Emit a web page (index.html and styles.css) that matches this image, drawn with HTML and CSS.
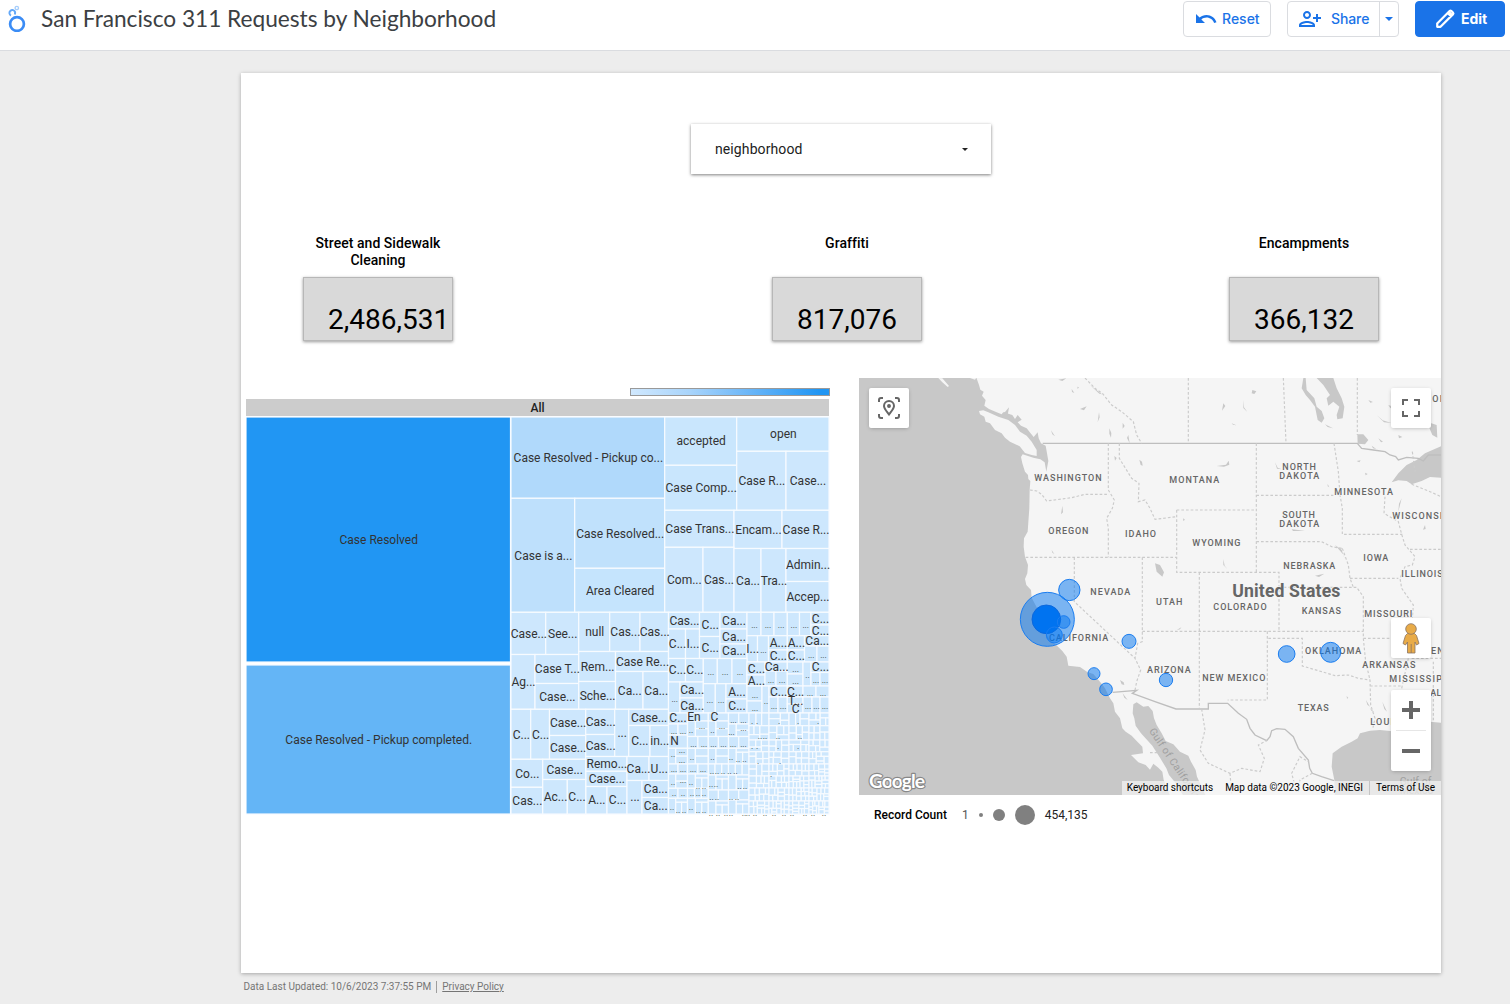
FILE: index.html
```html
<!DOCTYPE html>
<html lang="en">
<head>
<meta charset="utf-8">
<title>San Francisco 311 Requests by Neighborhood</title>
<link rel="stylesheet" href="styles.css">
</head>
<body>
<header class="topbar">
  <svg class="logo" width="20" height="28" viewBox="0 0 20 28" fill="none">
    <circle cx="10" cy="20" r="6.9" stroke="#3b8cf5" stroke-width="2.7"/>
    <path d="M4 11.500A2.900 2.900 0 1 1 8.100 8.100Q8.200 9.200 7.800 10.500" stroke="#63a8f8" stroke-width="2"/>
    <circle cx="9.8" cy="4" r="1.7" stroke="#a5cdfb" stroke-width="1.3"/>
  </svg>
  <h1 class="title">San Francisco 311 Requests by Neighborhood</h1>
  <div class="actions">
    <button class="btn reset">
      <svg width="24" height="24" viewBox="0 0 24 24" fill="currentColor"><path d="M12.5 8c-2.65 0-5.05.99-6.9 2.6L2 7v9h9l-3.62-3.62c1.39-1.16 3.16-1.88 5.12-1.88 3.54 0 6.55 2.31 7.6 5.5l2.37-.78C21.08 11.03 17.15 8 12.5 8z"/></svg>
      <span>Reset</span>
    </button>
    <div class="split">
      <button class="share">
        <svg width="24" height="24" viewBox="0 0 24 24" fill="currentColor"><path d="M9 12c2.21 0 4-1.79 4-4s-1.79-4-4-4-4 1.79-4 4 1.79 4 4 4zm0-6c1.1 0 2 .9 2 2s-.9 2-2 2-2-.9-2-2 .9-2 2-2zm0 8c-2.67 0-8 1.34-8 4v2h16v-2c0-2.660-5.330-4-8-4zm6 4H3c.2-.7 3.300-2 6-2s5.800 1.300 6 2zm5-8V7h-2v3h-3v2h3v3h2v-3h3v-2h-3z"/></svg>
        <span>Share</span>
      </button>
      <button class="more"><svg width="8" height="4" viewBox="0 0 8 4"><path d="M0 0h8L4 4z" fill="currentColor"/></svg></button>
    </div>
    <button class="btn edit">
      <svg width="22" height="22" viewBox="0 0 24 24" fill="none" stroke="currentColor" stroke-width="2.4" stroke-linejoin="round"><path d="M3.500 20.500v-3.600L17.300 3.100q.7-.6 1.400 0l2.200 2.200q.6.700 0 1.400L7.100 20.500zM15 5.500l3.500 3.500"/><path d="M16.500 4.500l3 3"/></svg>
      <span>Edit</span>
    </button>
  </div>
</header>

<main class="sheet">
  <div class="filter"><span>neighborhood</span><svg width="6" height="3" viewBox="0 0 6 3"><path d="M0 0h6L3 3z" fill="#222"/></svg></div>

  <section class="scores">
    <div class="score"><h2>Street and Sidewalk Cleaning</h2><div class="value">2,486,531</div></div>
    <div class="score"><h2>Graffiti</h2><div class="value">817,076</div></div>
    <div class="score"><h2>Encampments</h2><div class="value">366,132</div></div>
  </section>

  <section class="charts">
    <div class="treemap">
      <div class="scale"></div>
      <div class="root">All</div>
      <svg id="tiles" width="584" height="403" viewBox="246 416 584 403"></svg>
    </div>

    <div class="geo">
      <div class="map">
        <svg class="base" width="582" height="417" viewBox="12 9 1746 1251">
          <g class="land">
            <path d="M345 9L360 14 364 8 372 30 376 44 386 50 381 62 392 75 388 92 402 102 425 112 440 118 446 112 472 120 480 132 488 120 500 134 488 142 498 152 515 160 528 176 536 186 548 172 551 190 558 205 572 212 576 235 580 258 574 290 569 262 556 253 535 248 503 238 498 246 502 265 510 290 519 300 520 312 526 318 524 345 523 400 518 470 507 490 506 515 510 545 519 570 517 595 510 612 514 630 528 645 530 668 545 697 552 712 562 745 574 780 590 800 606 812 622 828 635 845 640 872 675 876 698 892 715 897 735 920 750 940 765 970 775 985 780 1010 795 1030 802 1060 812 1070 830 1082 845 1098 862 1115 864 1135 828 1140 850 1162 872 1170 885 1184 895 1166 910 1178 922 1190 926 1215 945 1262H1760V9z"/>
            <path d="M372 108L385 106 400 112 430 125 460 135 480 150 495 170 515 182 530 200 545 225 545 243 530 240 510 234 494 214 465 200 450 188 440 175 420 165 405 145 392 140 388 125 375 118zM250 9L262 10 282 33 278 36 262 22z"/>
          </g>
          <g class="water">
            <path d="M835 988L845 982 865 995 880 993 893 1008 897 1030 905 1050 920 1075 932 1098 955 1108 975 1130 1000 1142 1008 1160 1022 1185 1026 1205 1040 1235 1052 1262H985L960 1222 942 1200 934 1180 915 1148 892 1112 858 1075 842 1052 838 1030 833 1015z"/>
            <path d="M1758 1043L1725 1040 1700 1065 1640 1072 1605 1068 1575 1065 1545 1067 1515 1075 1508 1090 1490 1100 1460 1115 1433 1135 1430 1175 1438 1215 1440 1262H1760z"/>
            <path d="M1385 9H1435L1445 40 1460 70 1468 95 1463 130 1447 133 1445 120 1453 95 1435 80 1420 92 1415 70 1425 60 1405 30zM1345 9L1340 40 1352 60 1365 75 1380 95 1388 135 1400 143 1408 130 1400 108 1385 95 1378 70 1355 45 1352 9z"/>
            <path d="M1610 322L1630 295 1655 270 1685 255 1710 235 1760 213V308L1725 306 1700 318 1670 328 1655 318 1630 316zM1715 140L1745 150 1747 188 1732 180zM1507 178L1525 178 1540 195 1530 208 1508 206z"/>
            <path d="M900 565L915 570 927 592 922 605 905 590zM795 915L806 922 808 930 800 928zM803 955L818 975 808 968zM853 254l8 6 2 12-6-2zM778 243l7 6-5 8zM763 160l6 14-1 14-5-12zM732 112l2 15-6 14zM675 102l20-8-8 12zM588 166l12 18-8-6zM820 180l4 25-8-16zM610 14l24-4-12 8zM705 30l36 28-8-2zM650 42l8 12-7-3zM667 35l5 2-4 5zM440 115l10-4 12-14-4 24zM622 392l2 20-6 6zM590 525l8 12-6-4zM803 143l6 10-6 8z"/>
            <path d="M1192 45l12 4-6 8-8-2zM1105 85l6 8-10 14zM1165 75l2 22 10 14-12-12zM1130 145l14 6-10-2zM1085 273l28-4 8-12 2 12-16 6zM1260 262l8 16 12 5-14-2zM1410 148l24 12-16-4zM1600 90l18 6-12 4zM1565 120l18 16 26 8-22-2zM1540 75l14 6-8 2zM1625 50l20-6-8 8zM1570 190l14 10-6 2zM1630 180l12 6-10 4zM1550 212l14 10-10-2zM1505 258l12-2-4 6zM1530 293l8 4-6 4zM1418 327l5 10-5-3zM1310 463l40 4-36 1zM1105 552l4 20 8 10-12-12zM1380 602l28-6-16 10zM965 765l14-8-4 6zM984 430l6 4-5 4zM1440 510l20 14 10 30-6-16zM1533 975l12 20-8-6zM1582 980l14 30-8-8zM1544 998l14 14-8-4zM1475 963l5 6-4 2zM1640 370l-10 40 2-24zM1710 450l-6 14 8-2z"/>
          </g>
          <g class="lines">
            <path class="solid" d="M563 205H1507L1520 220 1555 225 1590 230 1605 240 1622 245 1630 255 1655 247 1690 250 1705 258 1720 240 1758 240M773 952L845 946 832 955 900 980 963 1002H1060V985H1118L1150 1015 1175 1033 1185 1060 1200 1080 1235 1097 1245 1085 1250 1067 1265 1061 1290 1063 1315 1085 1330 1120 1360 1155 1364 1180 1372 1195 1400 1205 1437 1217"/>
            <path d="M525 345L545 348 560 358 575 378 620 372 650 368 690 358H762M760 205V345L778 375 772 400 755 430 760 460V547M512 547H965M658 547V680L840 850 857 885 845 920 840 946M862 547V800L848 805 840 850M862 769H1525M793 205V250L830 310 852 325 850 380 870 375 885 400 900 433 965 425M965 405H1203M965 405V592H1272V769M1204 205V592M1033 592V1002M1204 361H1435M1204 500H1400L1430 515 1460 520M1437 205L1450 290 1455 360 1462 400V478H1642M1462 520L1480 570 1485 610 1495 637M1485 610H1630M1272 637H1505L1525 665V790M1590 365L1587 415 1630 440 1640 478 1650 510 1680 545 1672 570 1650 575 1635 610 1640 640 1675 690 1672 730M1665 523H1758"/>
            <path d="M1237 769V975H1118M1240 790H1342V873L1400 890 1440 902 1480 900 1510 910 1545 915 1547 990 1560 1030 1553 1062M1525 790L1532 860 1545 915M1545 933H1642M1525 790H1640M1670 850H1758M1660 850L1640 940 1645 1000M1735 860V1040M690 9L720 40 742 55 770 90 800 110 835 140 845 180 860 205M1000 9V205M1285 9L1293 205M1507 9V180M1670 328L1725 350 1758 365M1040 1002L1050 1065 1035 1125 1060 1165 1125 1195 1160 1180 1215 1190 1228 1150 1210 1110 1238 1095M1325 1250L1310 1195 1335 1145 1360 1160M885 1133H920M1125 1195L1130 1255M1372 1195L1335 1215 1330 1250M1672 230L1680 290"/>
          </g>
          <g class="names">
            <text x="538" y="319" textLength="202">WASHINGTON</text><text x="580" y="476" textLength="120">OREGON</text>
            <text x="810" y="487" textLength="93">IDAHO</text><text x="943" y="323" textLength="150">MONTANA</text>
            <text x="1282" y="284" textLength="101">NORTH</text><text x="1273" y="311" textLength="120">DAKOTA</text>
            <text x="1282" y="428" textLength="98">SOUTH</text><text x="1273" y="455" textLength="120">DAKOTA</text>
            <text x="1438" y="359" textLength="176">MINNESOTA</text><text x="1612" y="431" textLength="172">WISCONSIN</text>
            <text x="1012" y="512" textLength="144">WYOMING</text><text x="1285" y="581" textLength="156">NEBRASKA</text>
            <text x="1525" y="559" textLength="75">IOWA</text><text x="1639" y="605" textLength="124">ILLINOIS</text>
            <text x="706" y="659" textLength="120">NEVADA</text><text x="582" y="799" textLength="178">CALIFORNIA</text>
            <text x="903" y="689" textLength="79">UTAH</text><text x="1075" y="706" textLength="160">COLORADO</text>
            <text x="1340" y="716" textLength="118">KANSAS</text><text x="1528" y="725" textLength="144">MISSOURI</text>
            <text x="876" y="893" textLength="131">ARIZONA</text><text x="1042" y="917" textLength="189">NEW MEXICO</text>
            <text x="1350" y="836" textLength="169">OKLAHOMA</text><text x="1522" y="878" textLength="159">ARKANSAS</text>
            <text x="1603" y="920" textLength="190">MISSISSIPPI</text><text x="1328" y="1007" textLength="93">TEXAS</text>
            <text x="1546" y="1051" textLength="165">LOUISIANA</text><text x="1726" y="964" textLength="130">ALABAMA</text>
            <text x="1708" y="836" textLength="176">TENNESSEE</text><text x="1732" y="82" textLength="136">ONTARIO</text>
            <text class="country" x="1132" y="667" textLength="324">United States</text>
            <text class="sea" transform="translate(881 1068) rotate(56)">Gulf of California</text>
            <text class="sea" x="1634" y="1230" textLength="96">Gulf of</text><text class="sea" x="1634" y="1258" textLength="102">Mexico</text>
          </g>
          <g class="bubbles">
            <circle cx="577" cy="733" r="81"/><circle class="core" cx="574" cy="733" r="43"/><circle cx="626" cy="741" r="19"/><circle cx="598" cy="780" r="24"/><circle cx="643" cy="645" r="32"/><circle cx="822" cy="799" r="21"/><circle cx="717" cy="896" r="18"/><circle cx="753" cy="943" r="19"/><circle cx="933" cy="915" r="20"/><circle cx="1295" cy="837" r="25"/><circle cx="1427" cy="832" r="30"/>
          </g>
          <text class="brand" x="42" y="1238" textLength="168">Google</text>
        </svg>
        <div class="ctl locate"><svg width="24" height="24" viewBox="0 0 24 24" fill="none" stroke="#666" stroke-width="2"><path d="M2 6V4q0-2 2-2h2M18 2h2q2 0 2 2v2M22 18v2q0 2-2 2h-2M6 22H4q-2 0-2-2v-2"/><path d="M12 18.500C9 14.500 7 12.500 7 10a5 5 0 0 1 10 0c0 2.500-2 4.500-5 8.500z"/><circle cx="12" cy="10" r="1.200" fill="#666" stroke-width="1.500"/></svg></div>
        <div class="ctl full"><svg width="18" height="18" viewBox="0 0 18 18" fill="#666"><path d="M0 0v6h2V2h4V0H0zm16 0h-4v2h4v4h2V0h-2zm0 16h-4v2h6v-6h-2v4zM2 12H0v6h6v-2H2v-4z"/></svg></div>
        <div class="ctl pegman"><svg width="18" height="31" viewBox="0 0 18 31" fill="#e8ab48" stroke="#8a7462" stroke-width=".8"><path d="M5.500 10.500h7l2 2 2.500 8-2.500 1.500-1.500-3V30h-7.500V19l-2 3L1 20.500l2.500-8z"/><path d="M9.200 21v9"/><circle cx="9" cy="6" r="5.300"/></svg></div>
        <div class="ctl zoom"><svg width="18" height="18" viewBox="0 0 18 18" fill="#666"><path d="M7 0h4v7h7v4h-7v7H7v-7H0V7h7z"/></svg><i></i><svg width="18" height="18" viewBox="0 0 18 18" fill="#666"><path d="M0 7h18v4H0z"/></svg></div>
        <div class="legal"><span>Keyboard shortcuts</span><span>Map data ©2023 Google, INEGI</span><span>Terms of Use</span></div>
      </div>
      <div class="sizes"><b>Record Count</b><span class="min">1</span><i class="dot s"></i><i class="dot m"></i><i class="dot l"></i><span>454,135</span></div>
    </div>
  </section>
</main>
<footer class="foot"><span>Data Last Updated: 10/6/2023 7:37:55 PM</span><a>Privacy Policy</a></footer>
<script src="treemap.js"></script>
</body>
</html>
```
FILE: styles.css
```css
* { box-sizing: border-box; }
body { margin: 0; height: 1004px; overflow: hidden; background: #ededed; font-family: Roboto, sans-serif; color: #212121; }
button { font: inherit; background: #fff; cursor: pointer; }
.topbar { display: flex; align-items: flex-start; height: 51px; background: #fff; border-bottom: 1px solid #dadce0; padding: 1px 5px 0 7px; }
.logo { margin-top: 3px; }
.title { margin: 3px 0 0 14px; font: 400 22.7px/30px Lato, sans-serif; letter-spacing: -.02px; color: #3c4043; white-space: nowrap; }
.actions { display: flex; gap: 16px; margin-left: auto; font: 500 14px/20px Inter, sans-serif; color: #1a73e8; }
.btn, .split { display: flex; align-items: center; height: 36px; border: 1px solid #dadce0; border-radius: 4px; color: #1a73e8; }
.reset { width: 88px; padding: 0 0 0 10px; gap: 4px; }
.split { width: 112px; background: #fff; }
.share { display: flex; align-items: center; gap: 9px; border: 0; padding: 0 0 0 10px; color: inherit; background: none; width: 91px; letter-spacing: -.1px; }
.more { display: flex; align-items: center; justify-content: center; height: 34px; width: 19px; padding: 0; border: 0; border-left: 1px solid #dadce0; color: inherit; background: none; }
.edit { width: 90px; background: #1a73e8; border-color: #1a73e8; color: #fff; gap: 5px; padding: 0 0 0 18px; font-weight: 700; }

.sheet { width: 1200px; height: 900px; margin: 22px 0 0 241px; padding-top: 51px; background: #fff; box-shadow: 0 1px 4px rgba(0,0,0,.3); }
.filter { display: flex; align-items: center; justify-content: space-between; width: 300px; height: 50px; margin: 0 0 0 450px; padding: 0 23px 0 24px; font-size: 14px; letter-spacing: .1px; background: #fff; box-shadow: 0 1px 3px rgba(0,0,0,.5); }
.scores { display: grid; grid-template-columns: 469px 457px 150px; margin: 61px 0 0 62px; }
.score { width: 150px; }
.score h2 { margin: 0 0 8px; height: 34px; font: 500 14px/17px Roboto, sans-serif; letter-spacing: .04px; color: #000; text-align: center; }
.value { height: 64px; padding: 22px 0 0 24px; background: #d9d9d9; border: 1px solid #b7b7b7; box-shadow: 0 1px 3px rgba(0,0,0,.4); font-size: 28px; line-height: 40px; color: #000; white-space: nowrap; }
.charts { display: flex; gap: 29px; margin: 37px 0 0 5px; }
.treemap { display: flex; flex-direction: column; width: 584px; padding-top: 10px; }
.scale { width: 200px; height: 8px; align-self: flex-end; border: 1px solid #999; background: linear-gradient(90deg, #d0e8fe, #a8d4fb 30%, #6ab6f8 60%, #2196f3 95%); }
.root { width: 583px; height: 17px; margin-top: 3px; background: #ccc; font: 500 12px/18px Roboto, sans-serif; text-align: center; }
#tiles { display: block; }
#tiles text { font: 12px Roboto, sans-serif; fill: #333; text-anchor: middle; }
#tiles .dots { font-size: 8.5px; }
.geo { width: 582px; }
.map { position: relative; height: 417px; overflow: hidden; background: #c8c8c8; }
.base { display: block; }
.land { fill: #f5f5f5; }
.water { fill: #c8c8c8; }
.lines { fill: none; stroke: #cbcbcb; stroke-width: 3.500; stroke-dasharray: 8 6; }
.lines .solid { stroke: #bebebe; stroke-width: 4; stroke-dasharray: none; }
.names { font: 500 27px Roboto, sans-serif; fill: #666; stroke: #f5f5f5; stroke-width: 5; paint-order: stroke; stroke-opacity: .8; }
.names .country { font-size: 53px; font-weight: 700; stroke-width: 6; }
.names .sea { font-size: 31px; font-weight: 400; fill: #a0a0a0; stroke: none; letter-spacing: 1px; }
.bubbles { fill: rgba(0,115,240,.5); stroke: #1a7df0; stroke-width: 3; }
.bubbles .core { fill: #0073f0; stroke: #0c68dd; }
.brand { font: 700 58px Lato, sans-serif; fill: #fff; stroke: #888; stroke-width: 7; paint-order: stroke; stroke-linejoin: round; }
.ctl { position: absolute; display: flex; align-items: center; justify-content: center; width: 40px; height: 40px; background: #fff; border-radius: 2px; box-shadow: 0 1px 4px -1px rgba(0,0,0,.3); }
.locate { left: 10px; top: 10px; }
.full { right: 10px; top: 10px; }
.pegman { right: 10px; top: 240px; }
.zoom { right: 10px; top: 312px; height: 81px; flex-direction: column; gap: 11px; }
.zoom i { width: 30px; height: 1px; background: #e6e6e6; }
.legal { position: absolute; right: 0; bottom: 0; display: flex; height: 14px; background: rgba(245,245,245,.7); font: 10px/14px Roboto, sans-serif; color: #000; letter-spacing: -.02px; white-space: nowrap; }
.legal span { padding: 0 6px; }
.legal span:nth-child(1) { padding-left: 5px; }
.legal span:nth-child(3) { border-left: 1px solid #c4c4c4; }
.sizes { display: flex; align-items: center; height: 20px; margin: 10px 0 0 15px; font-size: 12px; color: #212121; }
.sizes b { font-weight: 500; color: #000; }
.min { margin: 0 10px 0 15px; color: #555; }
.dot { border-radius: 50%; background: #808080; }
.s { width: 4px; height: 4px; margin-right: 10px; }
.m { width: 12px; height: 12px; margin-right: 10px; }
.l { width: 20px; height: 20px; margin-right: 10px; }
.foot { display: flex; align-items: center; margin: 8px 0 0 243.500px; font-size: 10px; line-height: 12px; color: #757575; }
.foot a { margin-left: 5px; padding-left: 5px; border-left: 1px solid #9e9e9e; text-decoration: underline; }
```
FILE: treemap.js
```js
// Tiles: left, top, right, bottom, label, fill
var tiles = [
[246,417,510.5,662,"Case Resolved","#2196f3"],[246,665,510.5,814,"Case Resolved - Pickup completed.","#64b5f6"],
[511,417,664.7,498.3,"Case Resolved - Pickup co...","#b0d9fb"],[511,498.3,574.7,612.3,"Case is a...","#bee0fc"],
[574.7,498.3,664.7,568.3,"Case Resolved...","#c0e1fc"],[574.7,568.3,664.7,612.3,"Area Cleared","#c5e4fd"],
[664.7,417,736.7,465.3,"accepted","#c9e6fd"],[664.7,465.3,736.7,510.3,"Case Comp...","#c9e6fd"],
[736.7,417,829,451.3,"open","#c9e6fd"],[736.7,451.3,786,510.3,"Case R..."],[786,451.3,829,510.3,"Case..."],
[664.7,510.3,734,547.3,"Case Trans..."],[734,510.3,782,548.5,"Encam..."],[782,510.3,829,548.5,"Case R..."],
[664.7,547.3,703,612.3,"Com..."],[703,547.3,734,612.3,"Cas..."],[734,548.5,761,612.3,"Ca..."],[761,548.5,786,612.3,"Tra..."],
[786,548.5,829,581.5,"Admin..."],[786,581.5,829,612.3,"Accep..."],
[511,612.3,545.7,654.5,"Case..."],[545.7,612.3,578.7,654.5,"See..."],[578.7,612.3,609.7,651.5,"null"],[609.7,612.3,640,651.5,"Cas..."],[640,612.3,668.5,651.5,"Cas..."],
[511,654.5,535,709.3,"Ag..."],[535,654.5,578.7,683.5,"Case T..."],[535,683.5,578.7,709.3,"Case..."],
[578.7,651.5,615.5,681.5,"Rem..."],[578.7,681.5,615.5,709.3,"Sche..."],[615.5,651.5,668.5,671.5,"Case Re..."],[615.5,671.5,643,709.3,"Ca..."],[643,671.5,668.5,709.3,"Ca..."],
[511,709.3,530.7,759.3,"C..."],[530.7,709.3,549.5,759.3,"C..."],[549.5,709.3,585.7,735.5,"Case..."],[549.5,735.5,585.7,759.3,"Case..."],
[585.7,709.3,614.7,734.5,"Cas..."],[585.7,734.5,614.7,756.5,"Cas..."],[614.7,709.3,628.7,756.5,"..."],[628.7,709.3,668.5,725.5,"Case..."],[628.7,725.5,650,756.5,"C..."],[650,725.5,668.5,756.5,"in..."],
[585.7,756.5,627,771.3,"Remo..."],[585.7,771.3,627,786.5,"Case..."],[585.7,786.5,607,814,"A..."],[607,786.5,627,814,"C..."],
[627,756.5,649,780.5,"Ca..."],[649,756.5,668.5,780.5,"U..."],[627,780.5,642,814,"..."],[642,780.5,668.5,797.5,"Ca..."],[642,797.5,668.5,814,"Ca..."],
[511,759.3,542.7,787.3,"Co..."],[511,787.3,542.7,814,"Cas..."],[542.7,759.3,585.7,779.5,"Case..."],[542.7,779.5,567.3,814,"Ac..."],[567.3,779.5,585.7,814,"C..."],
[668.5,612.3,699.5,629,"Cas..."],[668.5,629,685.5,658.5,"C..."],[685.5,629,699.5,658.5,"I..."],[699.5,612.3,720,636.5,"C..."],[699.5,636.5,720,658.5,"C..."],
[720,612.3,747,629,"Ca..."],[720,629,747,644,"Ca..."],[720,644,747,658.5,"Ca..."],
[747,612.3,761,635.7,"..."],[761,612.3,774,635.7,"..."],[774,612.3,787.3,635.7,"..."],[787.3,612.3,799.5,635.7,"..."],[799.5,612.3,811,635.7,"..."],[811,612.3,829,625,"C..."],[811,625,829,635.7,"C..."],
[747,635.7,757.5,662,"I..."],[757.5,635.7,768.5,662,"..."],[768.5,635.7,787.3,650,"A..."],[768.5,650,787.3,662,"C..."],[787.3,635.7,804.5,650,"A..."],[787.3,650,804.5,662,"C..."],[804.5,635.7,829,646,"Ca..."],[804.5,646,817,662,"..."],[817,646,829,662,"..."],
[668.5,658.5,685.5,682,"C..."],[685.5,658.5,703.3,682,"C..."],[703.3,658.5,717.3,683.7,"..."],[717.3,658.5,732,683.7,"..."],[732,658.5,747,683.7,"..."],
[668.5,682,680,713,"..."],[680,682,703.3,698,"Ca..."],[680,698,703.3,713,"Ca..."],[703.3,683.7,715.3,713,"..."],[715.3,683.7,726,713,"..."],[726,683.7,747,699,"A..."],[726,699,747,713,"C..."],
[747,662,765,675,"C..."],[747,675,765,686,"A..."],[765,662,787.3,671,"Ca..."],[765,671,776,686,"..."],[776,671,787.3,686,"..."],
[787.3,662,803,674,"..."],[787.3,674,803,686,"..."],[803,662,811,686,".."],[811,662,829,672.5,"C..."],[811,672.5,820,686,"..."],[820,672.5,829,686,"..."],
[747,686,762,701,"..."],[747,701,762,713,"..."],[762,686,769,713,".."],[769,686,787.3,697,"C..."],[769,697,778,713,"..."],[778,697,787.3,713,"..."],
[787.3,686,803,697,"C..."],[787.3,697,803,704,"T..."],[787.3,704,803,713,"C"],[803,686,816,697,"..."],[816,686,829,697,"..."],[803,697,812,713,"..."],[812,697,820,713,"..."],[820,697,829,713,"..."]
];
// Row edges and split pattern for each narrow column of small tiles.
// 1/2/3: equal cells, L: one tall + two stacked, T: one tall + cap over two
var cols = [
[668.5,687.5,[713,724,735,748.3,764,774,788.3,798.3,814],"121L2L2T"],
[687.5,708.3,[713,721,736.5,748.3,764,774,788.3,798.3,814],"1L2L2T3T"],
[708.3,728.5,[713,721,736.5,748.3,764,775,790,801,814],"1L2L3T2T"],
[728.5,749,[713,724,736.5,748.3,764,775,790,800,814],"2L2T3T2T"]
];
cols.forEach(function (c) {
  var p = c[3], a = c[0], b = c[1], w = b - a;
  for (var i = 0; i < 8; i++) {
    var t = c[2][i], u = c[2][i + 1], k = p[i], m = a + w * .38;
    if (k > 0) for (var j = 0; j < +k; j++) tiles.push([a + w * j / k, t, a + w * (j + 1) / k, u, ""]);
    else {
      tiles.push([a, t, m, u, ""]);
      if (k === "L") tiles.push([m, t, b, (t + u) / 2, ""], [m, (t + u) / 2, b, u, ""]);
      else tiles.push([m, t, b, t + 4, ""], [m, t + 4, (m + b) / 2, u, ""], [(m + b) / 2, t + 4, b, u, ""]);
    }
  }
});
// The long tail of tiny tiles is cut recursively, finer toward the lower right.
var seed = 7;
function rnd() { seed = (seed * 16807) % 2147483647; return seed / 2147483647; }
function cut(x0, y0, x1, y1) {
  var w = x1 - x0, h = y1 - y0, lim = 105 - (y0 - 713) * .7 - (x0 - 749) * .5;
  if (w * h < Math.max(lim, 26) || Math.max(w, h) < 5) { tiles.push([x0, y0, x1, y1, ""]); return; }
  var r = .35 + rnd() * .3;
  if (w > h * (.7 + rnd() * .6)) { cut(x0, y0, x0 + w * r, y1); cut(x0 + w * r, y0, x1, y1); }
  else { cut(x0, y0, x1, y0 + h * r); cut(x0, y0 + h * r, x1, y1); }
}
var ry = [713,725.7,740,751.7,764,776,788,801,814], rx = [749,769,789,809,829];
for (var i = 0; i < 8; i++) for (var j = 0; j < 4; j++) cut(rx[j], ry[i], rx[j + 1], ry[i + 1]);

// Free labels: x, baseline, text
var notes = [[678,722,"C..."],[694,721,"En"],[714.5,721,"C"],[674.5,745,"N"]];
function dots(y, xs, s) { xs.forEach(function (x) { notes.push([x, y, s]); }); }
dots(733.5,[674,683],"...");dots(757,[673],"..");dots(753,[682],"...");dots(763,[682],"...");dots(771.5,[674,683,693,703],"...");
dots(785,[673,691],"..");dots(783,[683],"...");dots(796,[674,683,692,698,704],"..");dots(813,[678,684,698,704],"..");dots(810,[672,691],"..");
dots(732.5,[691,712.5],"..");dots(728.5,[702,722],"...");dots(747,[693.5,704,713.5,723.5,733,743.5],"...");dots(759.5,[692,712.5,731],"..");
dots(722.5,[733.5,743.5],"...");dots(734.5,[731.5],"...");dots(730.5,[743.5],"...");dots(761.5,[738,744.5],"..");dots(774,[712,717,723,729.5,735.5],"..");
dots(786.5,[711,716],"..");dots(788.5,[698,704,739.5,745],"..");dots(799.5,[711.5,717,731,737],"..");
dots(815.5,[711,718,726,731,744,748,755,765,774,784,792,805,813,824],"..");dots(723.5,[752,757,779,798,818],".");dots(738.5,[760,765,778,800],"..");
dots(749,[752,757,778,798],".");dots(763.5,[758,780],".");dots(776.5,[771],".");

var svg = document.getElementById("tiles"), ns = "http://www.w3.org/2000/svg";
function add(name, attrs, txt) {
  var e = document.createElementNS(ns, name);
  for (var k in attrs) e.setAttribute(k, attrs[k]);
  if (txt) e.textContent = txt;
  svg.appendChild(e);
}
tiles.forEach(function (t) {
  add("rect", { x: t[0], y: t[1], width: t[2] - t[0], height: t[3] - t[1], fill: t[5] || "#cde7fd", stroke: "#f7fbff", "stroke-width": 1.2 });
});
tiles.forEach(function (t) {
  if (!t[4]) return;
  var small = t[4][0] === "." && t[0] > 668;
  add("text", { x: (t[0] + t[2]) / 2 + .5, y: (t[1] + t[3]) / 2 + 4.2, "class": small ? "dots" : "label" }, t[4]);
});
notes.forEach(function (n) {
  add("text", { x: n[0], y: n[1], "class": n[2][0] === "." ? "dots" : "label" }, n[2]);
});
```
